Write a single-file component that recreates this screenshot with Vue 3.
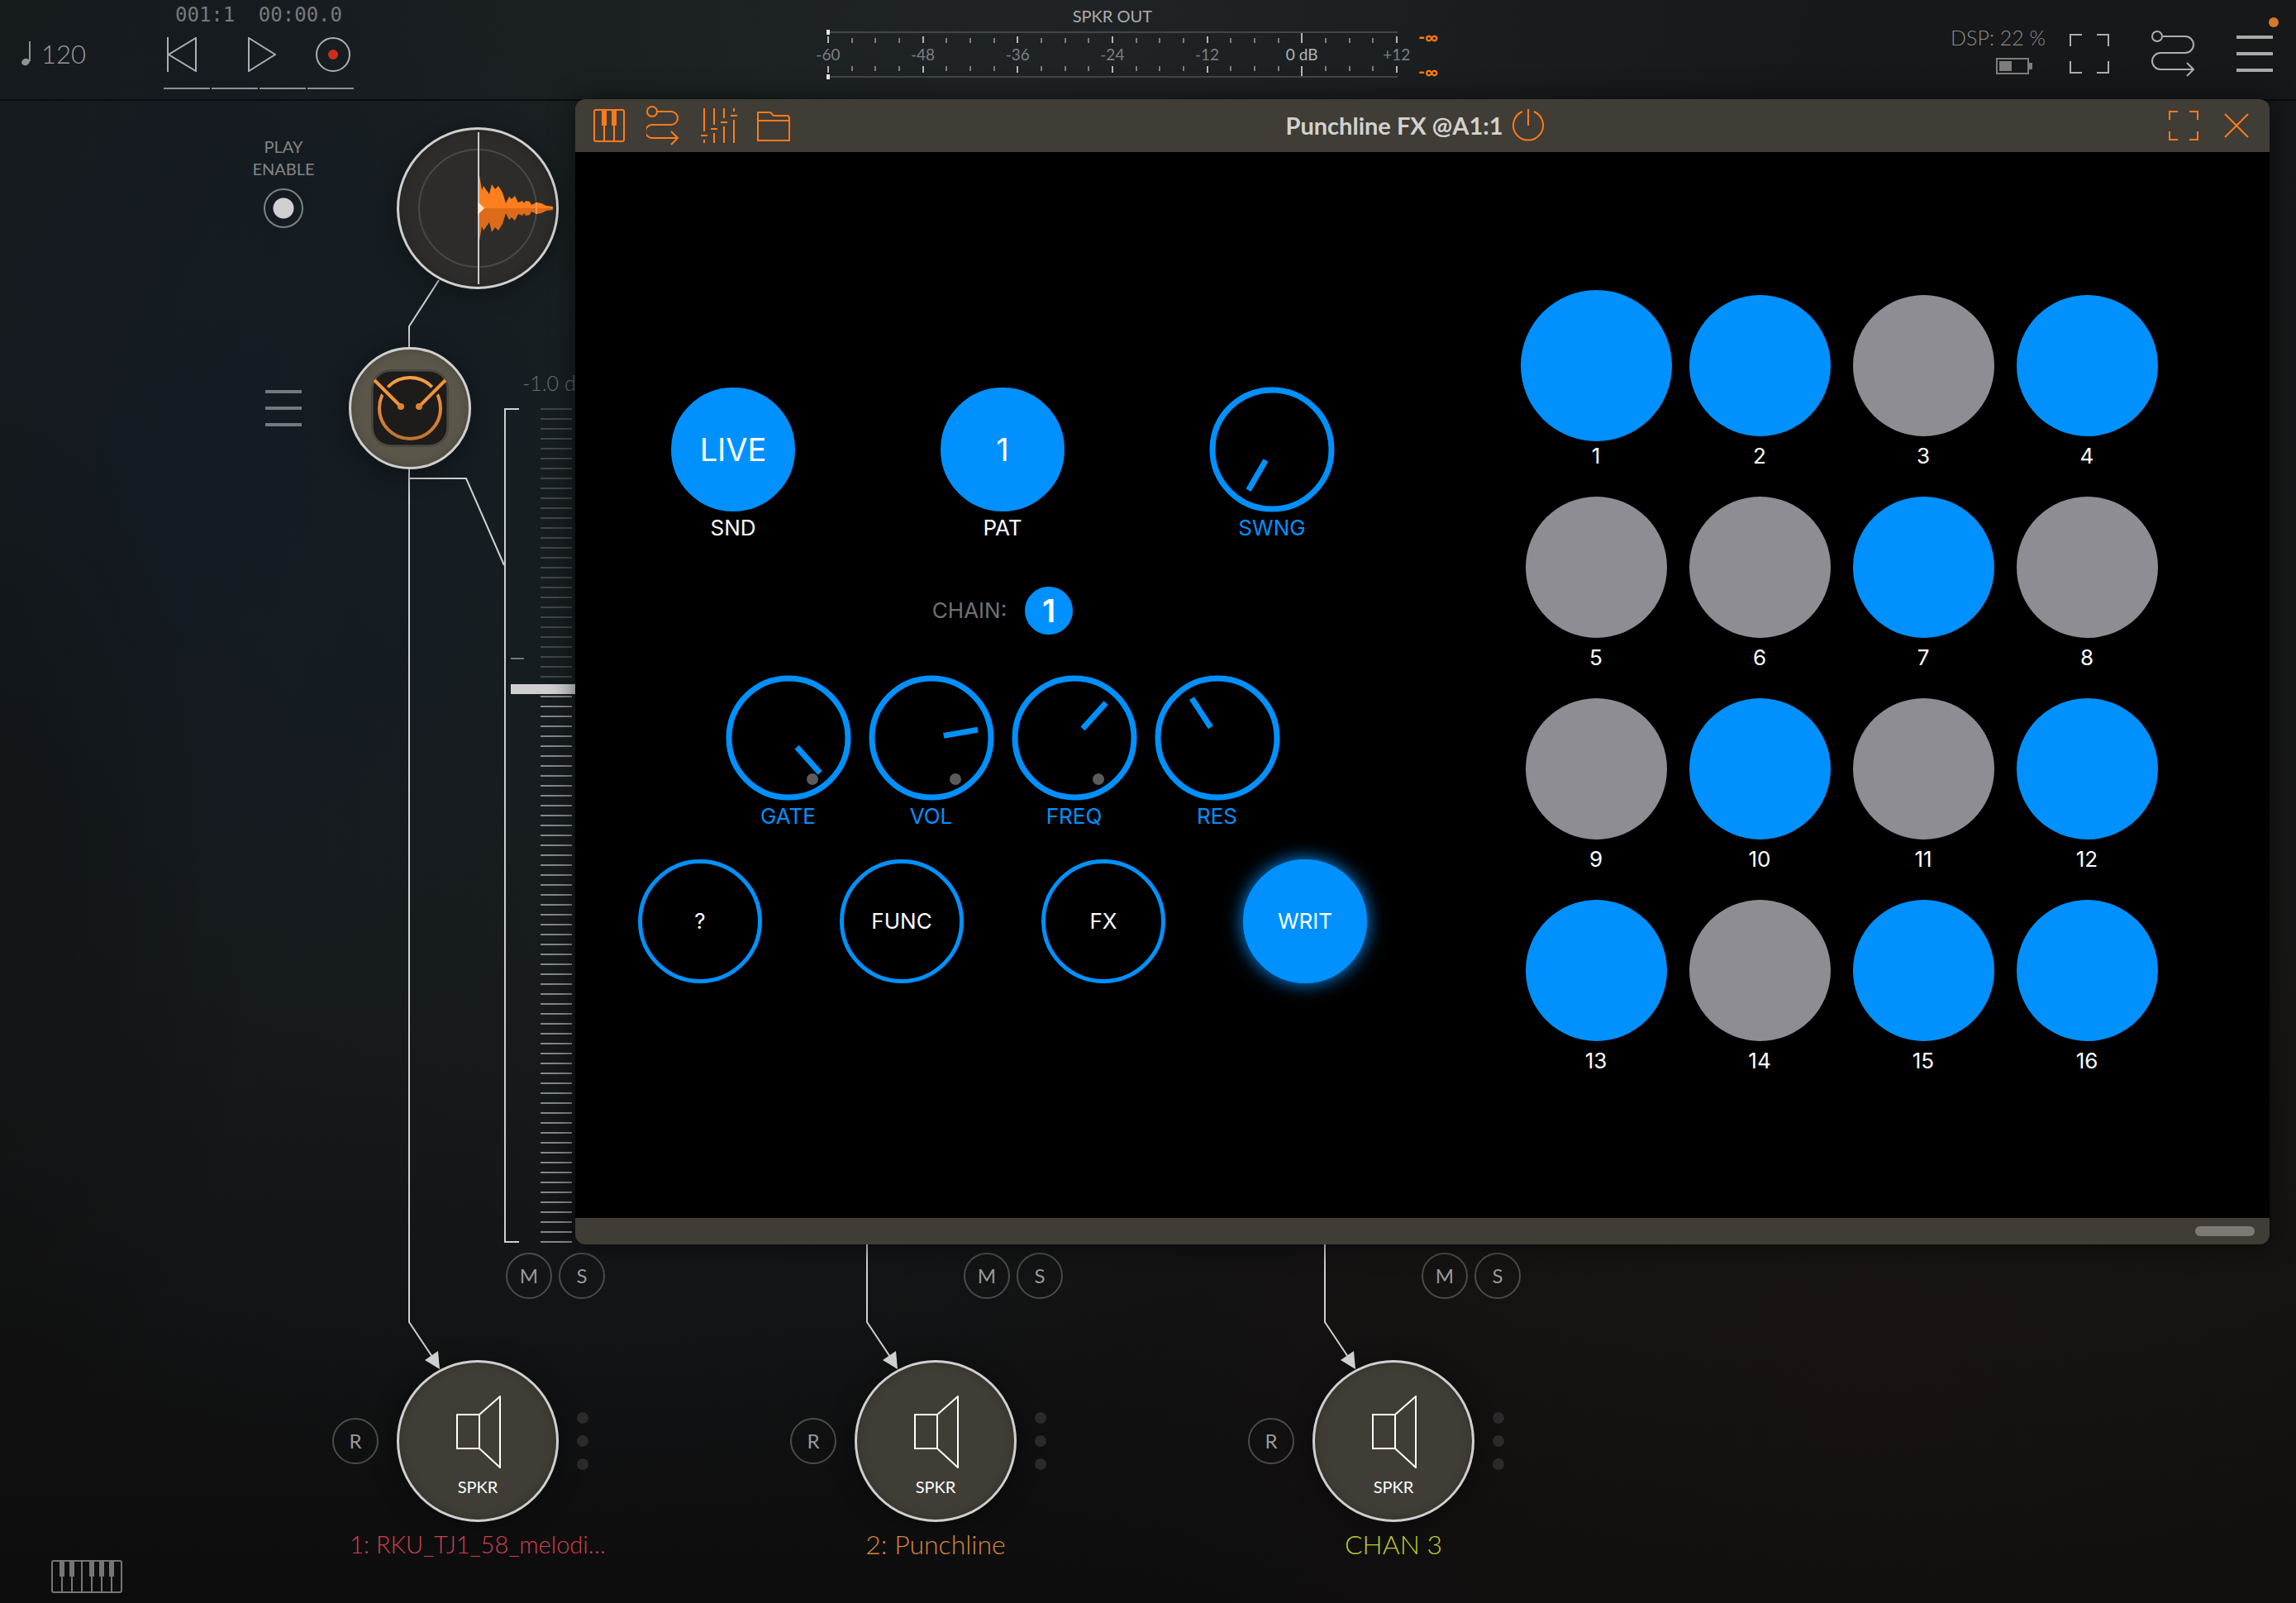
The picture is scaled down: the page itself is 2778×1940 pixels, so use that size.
<script setup>
import { ref } from 'vue'

const fader = ref(66.5)
const playEnabled = ref(true)

const meterLabels = ['-60', '-48', '-36', '-24', '-12', '0 dB', '+12']
const meterTicks = Array.from({ length: 25 }, (_, i) => ({
  x: Math.round(2 + (i * 688) / 24),
  major: i % 4 === 0,
  zero: i === 20,
}))

const channels = [
  { name: '1: RKU_TJ1_58_melodi…', tone: 'red', chain: true },
  { name: '2: Punchline', tone: 'orange' },
  { name: 'CHAN 3', tone: 'lime' },
]

const faderTicks = Array.from({ length: 85 }, (_, i) => i * 12)

const knobs = ref([
  { name: 'GATE', angle: 138, dot: true },
  { name: 'VOL', angle: 80, dot: true },
  { name: 'FREQ', angle: 42, dot: true },
  { name: 'RES', angle: -33, dot: false },
])
const swing = ref(-150)

const active = [1, 2, 4, 7, 10, 12, 13, 15, 16]
const pads = Array.from({ length: 16 }, (_, i) => ({ n: i + 1, on: active.includes(i + 1) }))
</script>

<template>
  <div class="app">
    <header class="topbar">
      <button class="tempo" aria-label="Tempo">
        <svg width="12" height="32" viewBox="0 0 12 32">
          <path d="M10 1V25" stroke="#8f9193" stroke-width="2" />
          <ellipse cx="5" cy="26" rx="5" ry="4" transform="rotate(-25 5 26)" fill="#8f9193" />
        </svg>
        <span>120</span>
      </button>

      <div class="transport">
        <div class="clock"><span>001:1</span><span>00:00.0</span></div>
        <div class="transport-buttons">
          <button aria-label="Rewind">
            <svg width="42" height="42" viewBox="0 0 42 42" class="line">
              <path d="M1 0V42M35 1V41L2 21Z" />
            </svg>
          </button>
          <button aria-label="Play">
            <svg width="42" height="42" viewBox="0 0 42 42" class="line">
              <path d="M9 1V41L41 21Z" />
            </svg>
          </button>
          <button aria-label="Record">
            <svg width="42" height="42" viewBox="0 0 42 42" class="line">
              <circle cx="21" cy="21" r="20" />
              <circle cx="21" cy="21" r="6" fill="#cb301b" stroke="none" />
            </svg>
          </button>
        </div>
        <div class="beats"><i v-for="n in 4" :key="n"></i></div>
      </div>

      <div class="meter">
        <div class="meter-title">SPKR OUT</div>
        <div class="meter-body">
          <div class="meter-scale">
            <svg width="692" height="16" viewBox="0 0 692 16">
              <path d="M0 3H691" stroke="#434444" stroke-width="2" />
              <path d="M2 0V6" stroke="#e8e8e8" stroke-width="4" />
              <path
                v-for="t in meterTicks" :key="t.x"
                :d="`M${t.x} ${t.zero ? 4 : t.major ? 8 : 10}V16`"
                :stroke="t.major ? '#b4b4b4' : '#7c7c7c'" stroke-width="2"
              />
            </svg>
            <div class="meter-labels">
              <span v-for="l in meterLabels" :key="l" :class="{ zero: l === '0 dB' }">{{ l }}</span>
            </div>
            <svg width="692" height="16" viewBox="0 0 692 16">
              <path d="M0 13H691" stroke="#434444" stroke-width="2" />
              <path d="M2 10V16" stroke="#e8e8e8" stroke-width="4" />
              <path
                v-for="t in meterTicks" :key="t.x"
                :d="`M${t.x} 0V${t.zero ? 12 : t.major ? 8 : 6}`"
                :stroke="t.major ? '#b4b4b4' : '#7c7c7c'" stroke-width="2"
              />
            </svg>
          </div>
          <div class="peaks"><span>-∞</span><span>-∞</span></div>
        </div>
      </div>

      <div class="status">
        <div class="dsp">
          <span>DSP: 22 %</span>
          <svg width="44" height="20" viewBox="0 0 44 20">
            <rect x="1" y="1" width="38" height="18" fill="none" stroke="#7d7d7d" stroke-width="2" />
            <rect x="4" y="4" width="15" height="12" fill="#7d7d7d" />
            <rect x="40" y="6" width="4" height="8" fill="#7d7d7d" />
          </svg>
        </div>
        <button aria-label="Full screen">
          <svg width="48" height="48" viewBox="0 0 48 48" class="line">
            <path d="M1 15V1H15M33 1H47V15M47 33V47H33M15 47H1V33" />
          </svg>
        </button>
        <button aria-label="Routing">
          <svg width="52" height="56" viewBox="0 0 52 56" class="line">
            <circle cx="7" cy="7" r="6" />
            <path d="M14 7H41A10 10 0 0 1 41 27H11A10 10 0 0 0 11 47H50M43 39L51 47L43 55" />
          </svg>
        </button>
        <button class="menu" aria-label="Menu">
          <svg width="44" height="44" viewBox="0 0 44 44">
            <path d="M0 2H44M0 22H44M0 42H44" stroke="#aaaaaa" stroke-width="4" />
          </svg>
          <i class="badge"></i>
        </button>
      </div>
    </header>

    <main class="canvas">
      <div class="channels">
        <section v-for="ch in channels" :key="ch.name" class="channel">
          <svg class="wires" width="554" height="1540" viewBox="0 0 554 1540">
            <path v-if="ch.chain" d="M230 217L194 273V310M194 457H263L309 562" />
            <path d="M194 440V1478L224 1523" />
            <path class="arrow" d="M231 1535L213 1524L229 1513Z" />
          </svg>

          <div class="chain">
            <template v-if="ch.chain">
              <div class="side">
                <label class="play-enable">
                  <span>PLAY<br />ENABLE</span>
                  <input v-model="playEnabled" type="checkbox" />
                </label>
                <button aria-label="Channel menu">
                  <svg width="44" height="44" viewBox="0 0 44 44">
                    <path d="M0 2H44M0 22H44M0 42H44" stroke="#74797b" stroke-width="4" />
                  </svg>
                </button>
              </div>

              <button class="node sample" aria-label="Sample player">
                <svg width="188" height="188" viewBox="-94 -94 188 188">
                  <circle r="71" fill="none" stroke="#4a4846" stroke-width="2" />
                  <path
                    fill="#ff7f1e"
                    d="M0 0V-20L2 -40L5 -22L7 -27L14 -17L17 -29L21 -23L25 -27L30 -19L34 -6L38 -14L41 -11L45 -15L49 -7L54 -9L56 -6L58 -9L63 -8L65 -4L71 -7L77 -6L83 -3L91 -2V0Z"
                  />
                  <path
                    fill="#dd6b19" transform="scale(1 -1)"
                    d="M0 0V-20L2 -40L5 -22L7 -27L14 -17L17 -29L21 -23L25 -27L30 -19L34 -6L38 -14L41 -11L45 -15L49 -7L54 -9L56 -6L58 -9L63 -8L65 -4L71 -7L77 -6L83 -3L91 -2V0Z"
                  />
                  <path d="M71 -7V7" stroke="#f59450" stroke-width="2" />
                  <path d="M1 -92V92" stroke="#cccccc" stroke-width="2" />
                  <path d="M0 -8L8 0L0 8Z" fill="#ffe3cd" />
                </svg>
              </button>

              <button class="node effect" aria-label="Effect">
                <svg width="96" height="96" viewBox="-48 -48 96 96">
                  <defs>
                    <linearGradient id="amber" x1="0" y1="-40" x2="0" y2="40" gradientUnits="userSpaceOnUse">
                      <stop offset="0" stop-color="#ffa045" />
                      <stop offset="1" stop-color="#bd7130" />
                    </linearGradient>
                  </defs>
                  <rect x="-47" y="-47" width="94" height="94" rx="24" fill="#47443b" />
                  <rect x="-45" y="-45" width="90" height="90" rx="22" fill="#1d1c1b" stroke="#55544f" />
                  <circle r="37" fill="none" stroke="url(#amber)" stroke-width="4" />
                  <path d="M-36 -27L-16 -7M36 -27L16 -7" stroke="#1d1c1b" stroke-width="11" />
                  <path d="M-43 -34L-11 -2M43 -34L11 -2" stroke="#f29438" stroke-width="4" />
                  <circle cx="-11" cy="-2" r="4" fill="#dd8434" />
                  <circle cx="11" cy="-2" r="4" fill="#dd8434" />
                </svg>
              </button>

              <div class="fader">
                <span class="gain">-1.0 dB</span>
                <svg width="84" height="1010" viewBox="0 0 84 1010">
                  <path d="M18 1H1V1009H18" fill="none" stroke="#cfcfcf" stroke-width="2" />
                  <path d="M8 303H24" stroke="#767878" stroke-width="2" />
                  <path
                    v-for="y in faderTicks" :key="y" :d="`M44 ${y + 1}H82`"
                    :stroke="y < 340 ? '#454444' : '#868686'" stroke-width="2"
                  />
                </svg>
                <input v-model="fader" type="range" min="0" max="100" step="0.5" aria-label="Gain" />
              </div>
            </template>
          </div>

          <div class="mute-solo">
            <button class="round">M</button>
            <button class="round">S</button>
          </div>

          <div class="output">
            <button class="round">R</button>
            <button class="node speaker">
              <svg width="56" height="88" viewBox="0 0 56 88" fill="none" stroke="#ffffff" stroke-width="2">
                <path d="M3 23H30V64H3ZM30 23L55 1V87L30 64" />
              </svg>
              <span>SPKR</span>
            </button>
            <div class="dots"><i></i><i></i><i></i></div>
          </div>
          <div class="channel-name" :class="ch.tone">{{ ch.name }}</div>
        </section>
      </div>

      <section class="window">
        <div class="titlebar">
          <div class="tools">
            <button aria-label="Keyboard">
              <svg width="44" height="48" viewBox="0 0 44 48" class="hot">
                <rect x="3" y="5" width="36" height="38" rx="2" />
                <path d="M15 24V43M27 24V43" />
                <path d="M15 5V24M27 5V24" stroke-width="6" />
              </svg>
            </button>
            <button aria-label="Routing">
              <svg width="44" height="48" viewBox="0 0 44 48" class="hot">
                <path d="M11 7H30A8 8 0 0 1 30 23H7A8 8 0 0 0 7 39H37M30 31L38 39L30 47" />
                <circle cx="7" cy="7" r="6" fill="#403d36" />
              </svg>
            </button>
            <button aria-label="Parameters">
              <svg width="44" height="48" viewBox="0 0 44 48" class="hot">
                <path d="M4 3V31M4 41V45M0 36H8M16 3V23M16 33V45M12 28H20M28 3V15M28 25V45M24 20H32M40 3V7M40 17V45M36 12H44" />
              </svg>
            </button>
            <button aria-label="Presets">
              <svg width="44" height="48" viewBox="0 0 44 48" class="hot">
                <path d="M3 42V8H18L22 12H38Q41 12 41 16V42ZM3 18H41" />
              </svg>
            </button>
          </div>
          <div class="title">
            <h1>Punchline FX @A1:1</h1>
            <button aria-label="Power">
              <svg width="40" height="40" viewBox="0 0 40 40" class="hot">
                <path d="M13 3A18 18 0 1 0 27 3M20 0V20" />
              </svg>
            </button>
          </div>
          <div class="tools end">
            <button aria-label="Expand">
              <svg width="44" height="44" viewBox="0 0 44 44" class="hot">
                <path d="M5 15V5H15M29 5H39V15M39 29V39H29M15 39H5V29" />
              </svg>
            </button>
            <button aria-label="Close">
              <svg width="44" height="44" viewBox="0 0 44 44" class="hot">
                <path d="M8 8L36 36M36 8L8 36" />
              </svg>
            </button>
          </div>
        </div>

        <div class="plugin">
          <div class="panel">
            <div class="row wide">
              <div class="control">
                <div class="face"><button id="snd" class="disc big on">LIVE</button></div>
                <label for="snd">SND</label>
              </div>
              <div class="control">
                <div class="face"><button id="pat" class="disc big on">1</button></div>
                <label for="pat">PAT</label>
              </div>
              <label class="control knob">
                <span class="face">
                  <svg width="152" height="152" viewBox="-76 -76 152 152">
                    <circle r="72" />
                    <path d="M0 -15V-57" :transform="`rotate(${swing})`" />
                  </svg>
                  <input v-model="swing" type="range" min="-150" max="150" />
                </span>
                <span>SWNG</span>
              </label>
            </div>

            <div class="chain-row">
              <label for="chain">CHAIN:</label>
              <button id="chain" class="disc small on">1</button>
            </div>

            <div class="row tight">
              <label v-for="k in knobs" :key="k.name" class="control knob">
                <span class="face">
                  <svg width="152" height="152" viewBox="-76 -76 152 152">
                    <circle r="72" />
                    <path d="M0 -15V-57" :transform="`rotate(${k.angle})`" />
                    <circle v-if="k.dot" class="lock" cx="29" cy="50" r="7" />
                  </svg>
                  <input v-model="k.angle" type="range" min="-150" max="150" />
                </span>
                <span>{{ k.name }}</span>
              </label>
            </div>

            <div class="row modes">
              <button class="disc">?</button>
              <button class="disc">FUNC</button>
              <button class="disc">FX</button>
              <button class="disc on glow">WRIT</button>
            </div>
          </div>

          <div class="pads">
            <div v-for="p in pads" :key="p.n" class="pad">
              <button :id="`pad-${p.n}`" :class="{ on: p.on, current: p.n === 1 }"></button>
              <label :for="`pad-${p.n}`">{{ p.n }}</label>
            </div>
          </div>
        </div>

        <div class="grip"><i></i></div>
      </section>
    </main>

    <footer class="bottombar">
      <button aria-label="Show keyboard">
        <svg width="86" height="40" viewBox="0 0 86 40" fill="none" stroke="#757575" stroke-width="2">
          <rect x="1" y="1" width="84" height="38" rx="2" />
          <path d="M13 20V39M25 20V39M37 1V39M49 20V39M61 20V39M73 20V39" />
          <path d="M13 1V20M25 1V20M49 1V20M61 1V20M73 1V20" stroke-width="6" />
        </svg>
      </button>
    </footer>
  </div>
</template>

<style>
body {
  margin: 0;
  background: #0d0e0f;
}
</style>

<style scoped>
.app {
  min-height: 100vh;
  display: flex;
  flex-direction: column;
  overflow: hidden;
  font-family: Lato, "Liberation Sans", sans-serif;
  background:
    radial-gradient(ellipse 40% 45% at 82% 84%, rgba(40, 22, 14, 0.3), transparent),
    radial-gradient(ellipse 12% 40% at 0% 55%, rgba(0, 0, 0, 0.2), transparent),
    radial-gradient(ellipse 35% 30% at 45% 0%, rgba(34, 38, 40, 0.8), transparent),
    radial-gradient(ellipse 20% 45% at 9% 30%, rgba(18, 26, 36, 0.7), transparent),
    radial-gradient(ellipse 45% 70% at 25% 25%, #171f22, transparent),
    linear-gradient(to bottom, #161819, #161717 60%, #0d0d0e);
}

button {
  display: block;
  padding: 0;
  border: 0;
  background: none;
  color: inherit;
  font: inherit;
  cursor: pointer;
}

svg {
  display: block;
}

.line {
  fill: none;
  stroke: #adafaf;
  stroke-width: 2;
}

/* Top bar */
.topbar {
  height: 120px;
  display: flex;
  align-items: flex-start;
  padding: 0 28px 0 26px;
  border-bottom: 2px solid #0a0b0c;
}

.tempo {
  height: 120px;
  padding-top: 10px;
  width: 172px;
  display: flex;
  align-items: center;
  gap: 12px;
  color: #9a9c9e;
  font-size: 31px;
  font-weight: 300;
}

.transport {
  width: 230px;
  padding-top: 5px;
}

.clock {
  display: flex;
  justify-content: space-between;
  padding: 0 14px;
  font: 24px/26px "DejaVu Sans Mono", monospace;
  color: #77797b;
}

.transport-buttons {
  display: flex;
  justify-content: space-between;
  padding: 14px 4px 19px;
}

.beats {
  display: grid;
  grid-template-columns: repeat(4, 1fr);
  gap: 2px;
}

.beats i {
  height: 2px;
  background: #8e9090;
}

.meter {
  margin: 0 auto;
  padding: 6px 48px 0 0;
}

.meter-title {
  width: 692px;
  text-align: center;
  font-size: 20px;
  line-height: 26px;
  padding-bottom: 4px;
  color: #adadad;
}

.meter-body {
  display: flex;
  gap: 24px;
}

.meter-labels {
  display: flex;
  justify-content: space-between;
  height: 28px;
  padding: 0 2px;
  font-size: 19px;
  line-height: 28px;
  color: #7e7f80;
}

.meter-labels span {
  width: 0;
  display: flex;
  justify-content: center;
  white-space: nowrap;
}

.meter-labels .zero {
  color: #b4b4b4;
}

.peaks {
  display: flex;
  flex-direction: column;
  justify-content: space-between;
  font-size: 22px;
  font-weight: 700;
  line-height: 18px;
  color: #ff7a14;
}

.status {
  height: 110px;
  padding-top: 10px;
  display: flex;
  align-items: center;
  color: #8c8c8c;
}

.status button {
  margin-left: 51px;
}

.dsp {
  display: flex;
  flex-direction: column;
  align-items: flex-end;
  gap: 9px;
  margin-right: -22px;
  padding-bottom: 12px;
  font-size: 25px;
  font-weight: 300;
  line-height: 32px;
}

.dsp svg {
  margin-right: 16px;
}

.menu {
  position: relative;
}

.badge {
  position: absolute;
  right: -7px;
  top: -22px;
  width: 12px;
  height: 12px;
  border-radius: 50%;
  background: #d47a2c;
}

/* Mixer canvas */
.canvas {
  position: relative;
}

.channels {
  display: flex;
  padding-left: 301px;
}

.channel {
  position: relative;
  flex: none;
  width: 554px;
}

.wires {
  position: absolute;
  left: 0;
  top: 0;
  fill: none;
  stroke: #cfcfcf;
  stroke-width: 2;
}

.wires .arrow {
  fill: #cfcfcf;
  stroke: none;
}

.chain {
  position: relative;
  height: 1394px;
}

.side {
  width: 84px;
  display: flex;
  flex-direction: column;
  align-items: center;
  gap: 196px;
  padding-top: 42px;
}

.play-enable {
  display: flex;
  flex-direction: column;
  align-items: center;
  gap: 10px;
  text-align: center;
  font-size: 20px;
  line-height: 27px;
  color: #858585;
}

.play-enable input {
  appearance: none;
  width: 48px;
  height: 48px;
  margin: 0;
  border: 2px solid #7d8284;
  border-radius: 50%;
}

.play-enable input:checked {
  background: radial-gradient(circle, #d0d0d0 12px, transparent 13px);
}

.node {
  display: flex;
  align-items: center;
  justify-content: center;
  box-sizing: border-box;
  width: 196px;
  height: 196px;
  border: 3px solid #cfcfcf;
  border-radius: 50%;
  box-shadow: 0 4px 30px rgba(0, 0, 0, 0.4), inset 0 0 12px rgba(0, 0, 0, 0.2);
}

.sample {
  position: absolute;
  left: 179px;
  top: 32px;
  background: #2e2c2a;
}

.effect {
  position: absolute;
  left: 121px;
  top: 298px;
  width: 148px;
  height: 148px;
  background: #5a574a;
}

.fader {
  position: absolute;
  left: 309px;
  top: 372px;
}

.gain {
  position: absolute;
  left: 22px;
  bottom: 1025px;
  white-space: nowrap;
  font-size: 25px;
  font-weight: 300;
  line-height: 32px;
  color: #6a6e70;
}

.fader input {
  position: absolute;
  left: 8px;
  top: 0;
  appearance: none;
  writing-mode: vertical-lr;
  direction: rtl;
  width: 100px;
  height: 1010px;
  margin: 0;
  background: none;
}

.fader input::-webkit-slider-thumb {
  appearance: none;
  width: 100px;
  height: 12px;
  background: #cfcfcf;
}

.mute-solo {
  display: flex;
  gap: 8px;
  padding: 0 0 74px 311px;
}

.round {
  box-sizing: border-box;
  width: 56px;
  height: 56px;
  border: 2px solid #4b4b4b;
  border-radius: 50%;
  font-size: 24px;
  line-height: 50px;
  text-align: center;
  color: #9a9a9a;
}

.output {
  display: grid;
  grid-template-columns: 56px 196px 56px;
  justify-content: center;
  align-items: center;
  gap: 22px;
}

.speaker {
  flex-direction: column;
  gap: 8px;
  padding-top: 14px;
  background: #403d36;
  color: #ffffff;
  font-size: 20px;
  line-height: 28px;
}

.dots {
  display: flex;
  flex-direction: column;
  gap: 14px;
}

.dots i {
  width: 14px;
  height: 14px;
  border-radius: 50%;
  background: #2a2a2a;
}

.channel-name {
  padding: 10px 0 2px;
  text-align: center;
  font-size: 32px;
  font-weight: 300;
  line-height: 34px;
}

.red {
  font-size: 29px;
  color: #d04050;
}

.orange {
  color: #d4863f;
}

.lime {
  color: #bdcc38;
}

/* Plugin window */
.window {
  position: absolute;
  left: 696px;
  right: 32px;
  top: -2px;
  border-radius: 12px;
  overflow: hidden;
  background: #000000;
  box-shadow: 0 0 30px rgba(0, 0, 0, 0.6);
}

.titlebar {
  height: 64px;
  display: grid;
  grid-template-columns: 1fr auto 1fr;
  align-items: center;
  background: #403d36;
}

.hot {
  fill: none;
  stroke: #ff7a1c;
  stroke-width: 2;
}

.tools {
  display: flex;
  align-items: center;
  gap: 22px;
  padding: 0 18px 0 20px;
}

.end {
  justify-content: flex-end;
  gap: 20px;
}

.title {
  display: flex;
  align-items: center;
  gap: 10px;
  padding-right: 18px;
}

h1 {
  margin: 0;
  font-size: 29px;
  font-weight: 700;
  line-height: 40px;
  color: #d2d1cf;
}

.plugin {
  display: grid;
  grid-template-columns: 1034fr 1016fr;
  align-items: center;
  padding: 173px 0 174px;
  font-family: Inter, "Liberation Sans", sans-serif;
  font-size: 26px;
  line-height: 32px;
  color: #ffffff;
}

.panel {
  display: flex;
  flex-direction: column;
  align-items: center;
}

.row {
  display: flex;
}

.wide {
  gap: 174px;
}

.tight {
  gap: 21px;
  padding: 49px 0 36px;
}

.modes {
  gap: 94px;
}

.control {
  width: 152px;
  display: flex;
  flex-direction: column;
  align-items: center;
  gap: 3px;
}

.face {
  position: relative;
  display: flex;
  align-items: center;
  justify-content: center;
  width: 152px;
  height: 152px;
}

.knob {
  color: #0091ff;
}

.knob svg {
  fill: none;
  stroke: #0091ff;
  stroke-width: 7;
}

.knob .lock {
  fill: #5b5a5f;
  stroke: none;
}

.knob input {
  position: absolute;
  inset: 0;
  margin: 0;
  opacity: 0;
}

.disc {
  box-sizing: border-box;
  width: 150px;
  height: 150px;
  border: 5px solid #0091ff;
  border-radius: 50%;
  color: #ffffff;
}

.on {
  background: #0091ff;
}

.big {
  font-size: 38px;
}

.small {
  width: 58px;
  height: 58px;
  font-size: 38px;
  font-weight: 600;
}

.glow {
  box-shadow: 0 0 22px #0091ff;
}

.chain-row {
  display: flex;
  align-items: center;
  gap: 22px;
  padding-top: 55px;
  color: #707074;
}

.pads {
  display: grid;
  grid-template-columns: repeat(4, 172px);
  justify-content: center;
  gap: 33px 26px;
  padding-right: 20px;
}

.pad {
  display: flex;
  flex-direction: column;
  align-items: center;
  gap: 8px;
}

.pad button {
  width: 171px;
  height: 171px;
  border-radius: 50%;
  background: #8e8d93;
}

.pad .on {
  background: #0091ff;
}

.pad .current {
  box-shadow: 0 0 0 6px #0091ff;
}

.grip {
  height: 32px;
  display: flex;
  align-items: center;
  justify-content: flex-end;
  padding-right: 18px;
  background: #403d36;
}

.grip i {
  width: 72px;
  height: 12px;
  border-radius: 6px;
  background: #7c7a75;
}

.bottombar {
  padding: 0 62px 12px;
}
</style>
